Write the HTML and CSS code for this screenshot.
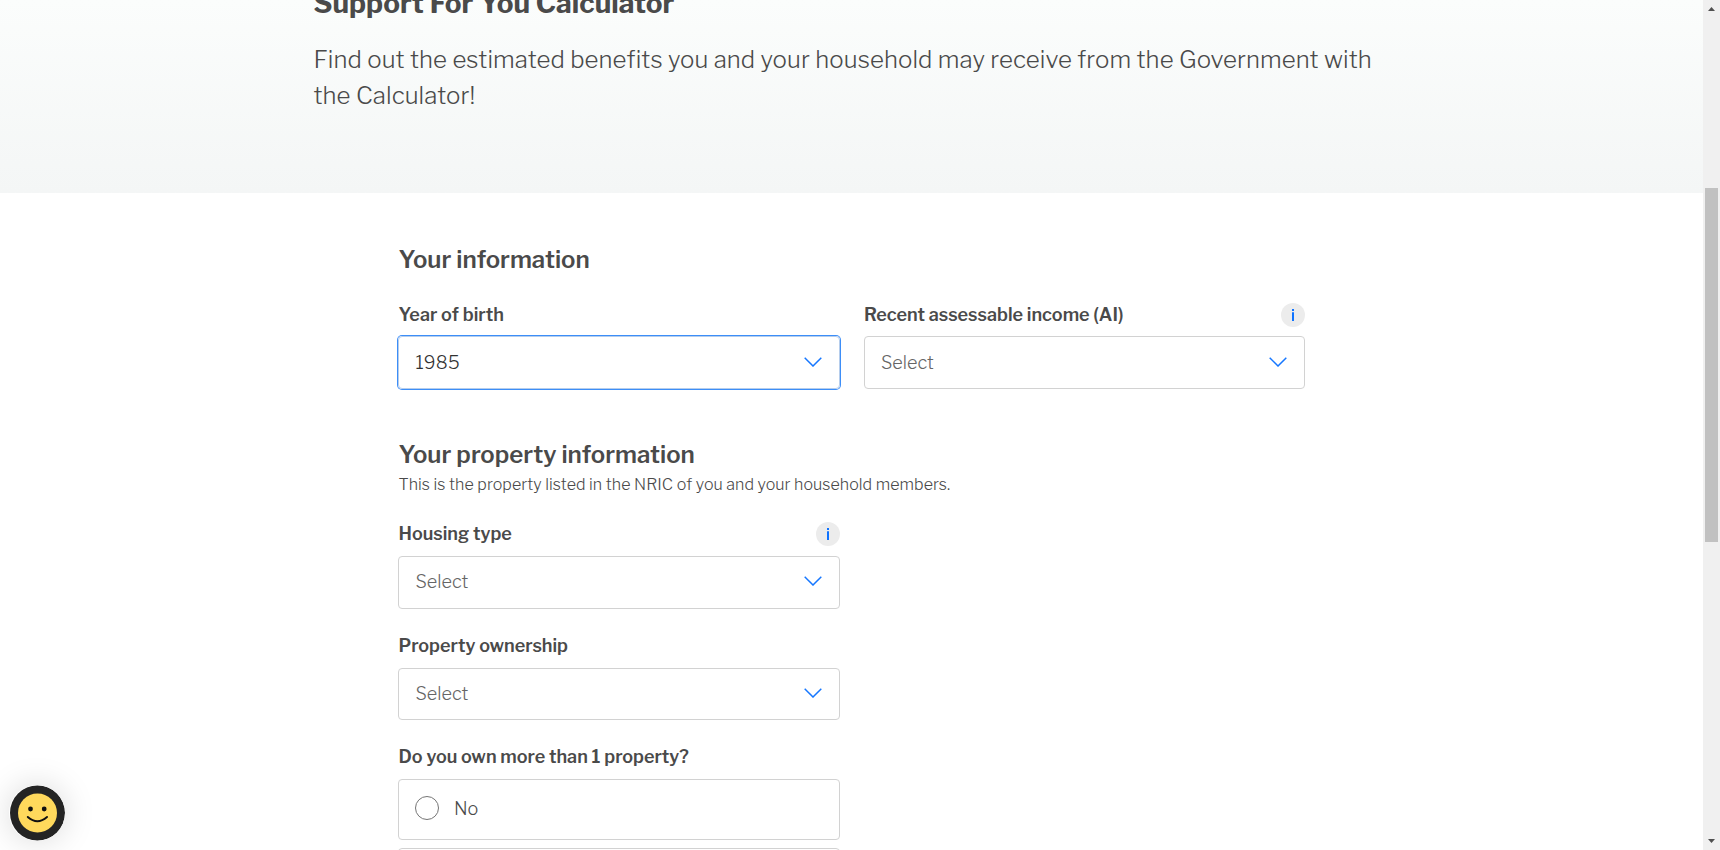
FILE: index.html
```
<!DOCTYPE html>
<html lang="en">
<head>
<meta charset="utf-8">
<title>Support For You Calculator</title>
<link rel="stylesheet" href="styles.css">
</head>
<body>
<div class="window">
  <main class="page">
    <header class="hero">
      <h1 class="hero-title">Support For You Calculator</h1>
      <p class="hero-text">Find out the estimated benefits you and your household may receive from the Government with<br>the Calculator!</p>
    </header>
    <form class="form">
      <h2 class="section-title">Your information</h2>
      <div class="row">
        <div class="field">
          <div class="label-row"><span class="label">Year of birth</span></div>
          <div class="select focused"><span class="value year">1985</span><svg class="chevron" viewBox="0 0 18 10"><path d="M.7.7 9 9 17.3.7"/></svg></div>
        </div>
        <div class="field income">
          <div class="label-row"><span class="label">Recent assessable income (AI)</span><svg class="info" viewBox="0 0 24 24"><circle cx="12" cy="12" r="12"/><path d="M11 6h2v2h-2zM11 9.300h2V18h-2z"/></svg></div>
          <div class="select"><span class="value">Select</span><svg class="chevron" viewBox="0 0 18 10"><path d="M.7.7 9 9 17.3.7"/></svg></div>
        </div>
      </div>
      <h2 class="section-title property-title">Your property information</h2>
      <p class="note">This is the property listed in the NRIC of you and your household members.</p>
      <div class="field housing">
        <div class="label-row"><span class="label">Housing type</span><svg class="info" viewBox="0 0 24 24"><circle cx="12" cy="12" r="12"/><path d="M11 6h2v2h-2zM11 9.300h2V18h-2z"/></svg></div>
        <div class="select"><span class="value">Select</span><svg class="chevron" viewBox="0 0 18 10"><path d="M.7.7 9 9 17.3.7"/></svg></div>
      </div>
      <div class="field ownership">
        <div class="label-row"><span class="label">Property ownership</span></div>
        <div class="select"><span class="value">Select</span><svg class="chevron" viewBox="0 0 18 10"><path d="M.7.7 9 9 17.3.7"/></svg></div>
      </div>
      <div class="field multiple">
        <div class="label-row"><span class="label">Do you own more than 1 property?</span></div>
        <div class="option"><span class="radio"></span><span class="option-text">No</span></div>
        <div class="option"></div>
      </div>
    </form>
  </main>
  <div class="scrollbar">
    <svg class="arrow" viewBox="0 0 7 4"><path d="M0 4 3.500 0 7 4z"/></svg>
    <div class="thumb"></div>
    <svg class="arrow arrow-down" viewBox="0 0 7 4"><path d="M0 0h7L3.500 4z"/></svg>
  </div>
</div>
<svg class="feedback" viewBox="0 0 56 56"><circle class="ring" cx="28.500" cy="28" r="27.500"/><circle class="face" cx="28.500" cy="28" r="19.500"/><circle class="eye" cx="21.500" cy="24" r="2.400"/><circle class="eye" cx="35.200" cy="24" r="2.400"/><path class="smile" d="M18.800 32q9.600 8.400 19.200 0"/></svg>
</body>
</html>
```
FILE: styles.css
```
* { box-sizing: border-box; }
body {
  margin: 0;
  background: #fff;
  color: #4a4a4a;
  font-family: "Libre Franklin", Inter, "Liberation Sans", sans-serif;
}
h1, h2, p { margin: 0; }
.window { display: flex; height: 850px; overflow: hidden; }
.page { flex: 1; overflow: hidden; }
.hero {
  height: 193px;
  padding-left: 313.500px;
  background: linear-gradient(#fbfdfc, #f4f6f6);
  overflow: hidden;
  white-space: nowrap;
}
.hero-title { margin-top: -17px; font-size: 28px; line-height: 40px; font-weight: 700; }
.hero-text { margin-top: 19px; font-size: 24px; line-height: 36px; font-weight: 300; letter-spacing: .09px; }
.form { padding: 49px 0 0 398px; white-space: nowrap; }
.section-title { padding-left: .5px; font-size: 24px; line-height: 36px; font-weight: 600; }
.row { display: flex; gap: 24px; margin-top: 25px; }
.row .label-row { margin-bottom: 9px; }
.field { width: 442px; }
.income { width: 441px; }
.label-row { display: flex; align-items: center; justify-content: space-between; height: 24px; margin-bottom: 10px; padding-left: .5px; }
.income .label-row { padding-left: 0; }
.label { font-size: 18px; line-height: 24px; font-weight: 600; }
.info { width: 24px; height: 24px; }
.info circle { fill: #ececec; }
.info path { fill: #0f73ff; }
.select {
  display: flex;
  align-items: center;
  justify-content: space-between;
  height: 53px;
  padding: 0 17px 0 16.500px;
  border: 1px solid #d2d2d2;
  border-radius: 4px;
  color: #666;
}
.income .select { padding-left: 16px; }
.focused { border-color: #b5cdec; box-shadow: 0 0 0 1px #3d8ef8; color: #323232; }
.value { font-size: 18px; line-height: 26px; font-weight: 300; }
.year { letter-spacing: .2px; }
.chevron { width: 18px; height: 10px; margin-bottom: 1px; fill: none; stroke: #1677ff; stroke-width: 1.5; }
.property-title { margin-top: 48px; }
.note { padding-left: .5px; font-size: 16px; line-height: 24px; font-weight: 300; letter-spacing: .06px; }
.housing { margin-top: 25px; }
.housing .select { padding-bottom: 2px; }
.ownership .select { height: 52px; padding-bottom: 1px; }
.ownership, .multiple { margin-top: 25px; }
.option {
  display: flex;
  align-items: center;
  gap: 15px;
  height: 61px;
  margin-bottom: 8px;
  padding: 0 0 3px 16px;
  border: 1px solid #d2d2d2;
  border-radius: 4px;
}
.radio { width: 24px; height: 24px; border: 1px solid #757575; border-radius: 50%; }
.option-text { font-size: 18px; font-weight: 300; }
.scrollbar {
  display: flex;
  flex-direction: column;
  align-items: center;
  width: 17px;
  padding: 7px 0;
  background: #f0f0f0;
}
.arrow { width: 7px; height: 4px; fill: #505050; }
.thumb { width: 13px; height: 354px; margin-top: 177px; background: #c1c1c1; }
.arrow-down { margin-top: auto; }
.feedback { position: absolute; left: 9px; top: 785px; width: 56px; height: 56px; border-radius: 50%; box-shadow: 0 0 32px rgba(0, 0, 0, .15); }
.ring { fill: #242424; }
.face { fill: #ffd95c; }
.eye { fill: #111; }
.smile { fill: none; stroke: #111; stroke-width: 2; stroke-linecap: round; }
```
